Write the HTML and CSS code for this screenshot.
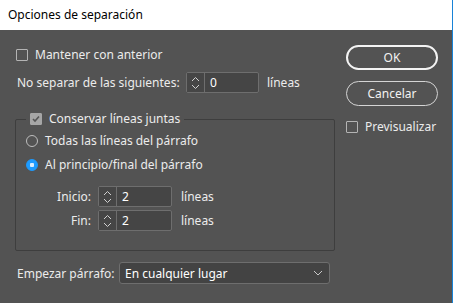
FILE: index.html
```html
<!DOCTYPE html>
<html lang="es">
<head>
    <meta charset="UTF-8">
    <meta name="viewport" content="width=device-width, initial-scale=1.0">
    <title>Opciones de separación</title>
    <link rel="stylesheet" href="styles.css">
</head>
<body>
    <div class="window">
        <div class="titlebar">Opciones de separación</div>
        <div class="content">
            <div class="main">
                <label class="check keep-prev"><span class="box"></span>Mantener con anterior</label>

                <div class="field-row keep-next">
                    <span class="label">No separar de las siguientes:</span>
                    <span class="spin wide">
                        <span class="arrows">
                            <svg width="9" height="16" viewBox="0 0 9 16"><path d="M1 6 L4.5 2.5 L8 6 M1 10 L4.5 13.5 L8 10" fill="none" stroke="#d0d0d0" stroke-width="1"/></svg>
                        </span>
                        <span class="value">0</span>
                    </span>
                    <span class="unit">líneas</span>
                </div>

                <fieldset class="group">
                    <legend><label class="check checked"><span class="box"><svg width="10" height="10" viewBox="0 0 10 10"><path d="M2 5 L4 7 L8 2.5" fill="none" stroke="#555" stroke-width="1.6"/></svg></span>Conservar líneas juntas</label></legend>
                    <label class="radio first"><span class="circle"></span>Todas las líneas del párrafo</label>
                    <label class="radio on"><span class="circle"></span>Al principio/final del párrafo</label>

                    <div class="field-row sub first-sub">
                        <span class="label sub-label">Inicio:</span>
                        <span class="spin">
                            <span class="arrows">
                                <svg width="9" height="16" viewBox="0 0 9 16"><path d="M1 6 L4.5 2.5 L8 6 M1 10 L4.5 13.5 L8 10" fill="none" stroke="#d0d0d0" stroke-width="1"/></svg>
                            </span>
                            <span class="value">2</span>
                        </span>
                        <span class="unit">líneas</span>
                    </div>
                    <div class="field-row sub">
                        <span class="label sub-label">Fin:</span>
                        <span class="spin">
                            <span class="arrows">
                                <svg width="9" height="16" viewBox="0 0 9 16"><path d="M1 6 L4.5 2.5 L8 6 M1 10 L4.5 13.5 L8 10" fill="none" stroke="#d0d0d0" stroke-width="1"/></svg>
                            </span>
                            <span class="value">2</span>
                        </span>
                        <span class="unit">líneas</span>
                    </div>
                </fieldset>

                <div class="field-row start">
                    <span class="label">Empezar párrafo:</span>
                    <span class="select">
                        <span>En cualquier lugar</span>
                        <svg width="10" height="6" viewBox="0 0 10 6"><path d="M1 1 L5 5 L9 1" fill="none" stroke="#c8c8c8" stroke-width="1"/></svg>
                    </span>
                </div>
            </div>

            <div class="side">
                <button class="btn primary">OK</button>
                <button class="btn">Cancelar</button>
                <label class="check preview"><span class="box"></span>Previsualizar</label>
            </div>
        </div>
    </div>
</body>
</html>
```

FILE: styles.css
```css
body {
    margin: 0;
    font-family: "Noto Sans", "Open Sans", sans-serif;
    font-size: 12px;
    color: #ececec;
    background-color: #535353;
}

.window {
    width: 453px;
    height: 303px;
    box-sizing: border-box;
    border-right: 1px solid #1883d7;
    background-color: #535353;
    overflow: hidden;
}

.titlebar {
    height: 30px;
    line-height: 30px;
    padding-left: 8px;
    background-color: #fff;
    color: #000;
}

.content {
    display: flex;
    padding: 15px 0 0 15px;
}

.main {
    width: 320px;
}

.side {
    margin-left: 11px;
    width: 92px;
    display: flex;
    flex-direction: column;
}

/* checkboxes and radios */
.check, .radio {
    display: flex;
    align-items: center;
    line-height: 16px;
    white-space: nowrap;
}

.box {
    width: 10px;
    height: 10px;
    border: 1px solid #b4b4b4;
    border-radius: 1px;
    margin-right: 7px;
    display: flex;
    align-items: center;
    justify-content: center;
}

.keep-prev {
    margin: 2px 0 0 1px;
}

.check.checked .box {
    background-color: #a6a6a6;
    border-color: #a6a6a6;
}

.circle {
    width: 10px;
    height: 10px;
    border: 1.5px solid #bdbdbd;
    border-radius: 50%;
    margin-right: 7px;
    box-sizing: content-box;
}

.radio.on .circle {
    border-color: #1d9bff;
    background: radial-gradient(circle, #d8eeff 0 2px, #1d9bff 2.5px);
}

.radio {
    margin-left: 10px;
}

.radio.first {
    margin-top: 6px;
}

.radio.on {
    margin-top: 8px;
}

/* numeric fields */
.field-row {
    display: flex;
    align-items: center;
}

.keep-next {
    margin-top: 9px;
    margin-left: 2px;
}

.keep-next .label {
    width: 169px;
}

.spin {
    display: flex;
    height: 21px;
    width: 73px;
    box-sizing: border-box;
    border: 1px solid #6e6e6e;
    border-radius: 2px;
    background-color: #454545;
}

.arrows {
    width: 17px;
    border-right: 1px solid #6e6e6e;
    display: flex;
    align-items: center;
    justify-content: center;
    background-color: #464646;
}

.value {
    padding-left: 5px;
    line-height: 19px;
    color: #fff;
}

.unit {
    margin-left: 8px;
}

.group {
    margin: 18px 0 0 0;
    padding: 0 0 19px 0;
    border: 1px solid #3e3e3e;
    border-radius: 2px;
}

.group legend {
    margin-left: 10px;
    padding: 0 4px;
}

.sub-label {
    width: 75px;
    text-align: right;
    margin-right: 7px;
}

.sub .spin {
    width: 74px;
}

.sub .unit {
    margin-left: 9px;
}

.first-sub {
    margin-top: 13px;
}

.sub + .sub {
    margin-top: 3px;
}

.start {
    margin-top: 11px;
    margin-left: 2px;
}

.start .label {
    width: 102px;
}

.select {
    width: 211px;
    height: 22px;
    box-sizing: border-box;
    border: 1px solid #6e6e6e;
    border-radius: 3px;
    background-color: #434343;
    display: flex;
    align-items: center;
    justify-content: space-between;
    padding: 0 6px 0 5px;
    color: #fff;
}

/* buttons */
.btn {
    height: 25px;
    width: 92px;
    border-radius: 13px;
    border: 1px solid #d4d4d4;
    background-color: transparent;
    color: #f2f2f2;
    font: inherit;
    padding: 0;
    cursor: pointer;
}

.btn.primary {
    border: 2px solid #f4f4f4;
}

.btn + .btn {
    margin-top: 11px;
}

.preview {
    margin-top: 13px;
}
```
